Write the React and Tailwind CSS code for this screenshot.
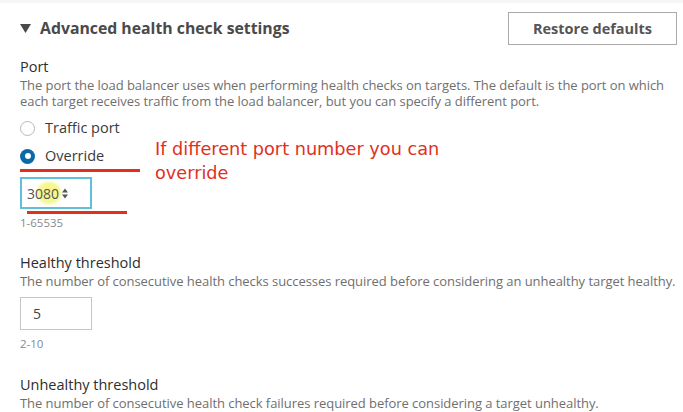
import { useState } from 'react'

const FONT = { fontFamily: '"Open Sans", "Noto Sans", sans-serif' }

function Radio({ checked, label }) {
  return (
    <div className="flex h-[28px] items-center gap-[10px] pl-[20px]">
      {checked ? (
        <span className="flex h-[15px] w-[15px] items-center justify-center rounded-full bg-[#0a6aa8]">
          <span className="h-[6px] w-[6px] rounded-full bg-white" />
        </span>
      ) : (
        <span className="h-[15px] w-[15px] rounded-full border border-[#b8b8b8] bg-white" />
      )}
      <span className="text-[14.5px] text-[#3a3a3a]">{label}</span>
    </div>
  )
}

function Field({ label, desc, children }) {
  return (
    <div className="pl-[20px] pr-[4px]">
      <div className="text-[14.5px] leading-[20px] text-[#2e2e2e]">{label}</div>
      <div className="whitespace-nowrap text-[13px] leading-[16px] tracking-[-0.05px] text-[#6f6f6f]">{desc}</div>
      {children}
    </div>
  )
}

export default function App() {
  const [port] = useState('3080')

  return (
    <div className="relative h-[412px] w-[683px] overflow-hidden bg-white" style={FONT}>
      <div className="h-[3px] bg-[#f6f6f6]" />

      {/* header */}
      <div className="flex items-center justify-between pl-[20px] pr-[6px] pt-[9px]">
        <div className="flex items-center gap-[8px]">
          <svg width="11" height="9" viewBox="0 0 11 9" className="mr-[1px]">
            <path d="M0 0 H11 L5.5 9 Z" fill="#4a4a4a" />
          </svg>
          <span className="text-[15.8px] font-bold text-[#4a4a4a]">Advanced health check settings</span>
        </div>
        <button className="h-[33px] w-[169px] border border-[#aaaaaa] bg-white text-[14.5px] font-bold text-[#555555]">
          Restore defaults
        </button>
      </div>

      <div className="mt-[12px]">
        <Field
          label="Port"
          desc={
            <>
              The port the load balancer uses when performing health checks on targets. The default is the port on which
              <br />
              each target receives traffic from the load balancer, but you can specify a different port.
            </>
          }
        />
        <div className="mt-[5px]">
          <Radio label="Traffic port" />
          <Radio checked label="Override" />
        </div>
        <div className="px-[20px] pt-[7px]">
          <div className="flex h-[32px] w-[72px] items-center border-2 border-[#62bfd8] bg-white pl-[5px]">
            <span className="relative text-[14px] text-[#555555]">
              <span className="absolute left-[10px] top-[-1px] h-[22px] w-[24px] rounded-full bg-[#f3f56a] opacity-75 blur-[1px]" />
              <span className="relative">{port}</span>
            </span>
            <svg width="6" height="11" viewBox="0 0 6 11" className="ml-[3px]">
              <path d="M0 4.5 L3 0.5 L6 4.5 Z M0 6.5 L3 10.5 L6 6.5 Z" fill="#555555" />
            </svg>
          </div>
          <div className="mt-[5px] text-[11.5px] text-[#8a8a8a]">1-65535</div>
        </div>

        <div className="mt-[22px]">
          <Field
            label="Healthy threshold"
            desc="The number of consecutive health checks successes required before considering an unhealthy target healthy."
          >
            <div className="mt-[8px] flex h-[33px] w-[72px] items-center border border-[#c6c6c6] pl-[12px] text-[14px] text-[#444444]">
              5
            </div>
            <div className="mt-[5px] text-[11.5px] text-[#8a8a8a]">2-10</div>
          </Field>
        </div>

        <div className="mt-[22px]">
          <Field
            label="Unhealthy threshold"
            desc="The number of consecutive health check failures required before considering a target unhealthy."
          />
        </div>
      </div>

      {/* annotation overlay */}
      <div className="absolute left-[20px] top-[169px] h-[3px] w-[120px] bg-[#e0301e]" />
      <div className="absolute left-[27px] top-[211px] h-[3px] w-[100px] bg-[#e0301e]" />
      <div
        className="absolute left-[155px] top-[137px] text-[17.7px] leading-[24px] text-[#e0301e]"
        style={{ fontFamily: '"DejaVu Sans", sans-serif' }}
      >
        If different port number you can
        <br />
        override
      </div>
    </div>
  )
}
